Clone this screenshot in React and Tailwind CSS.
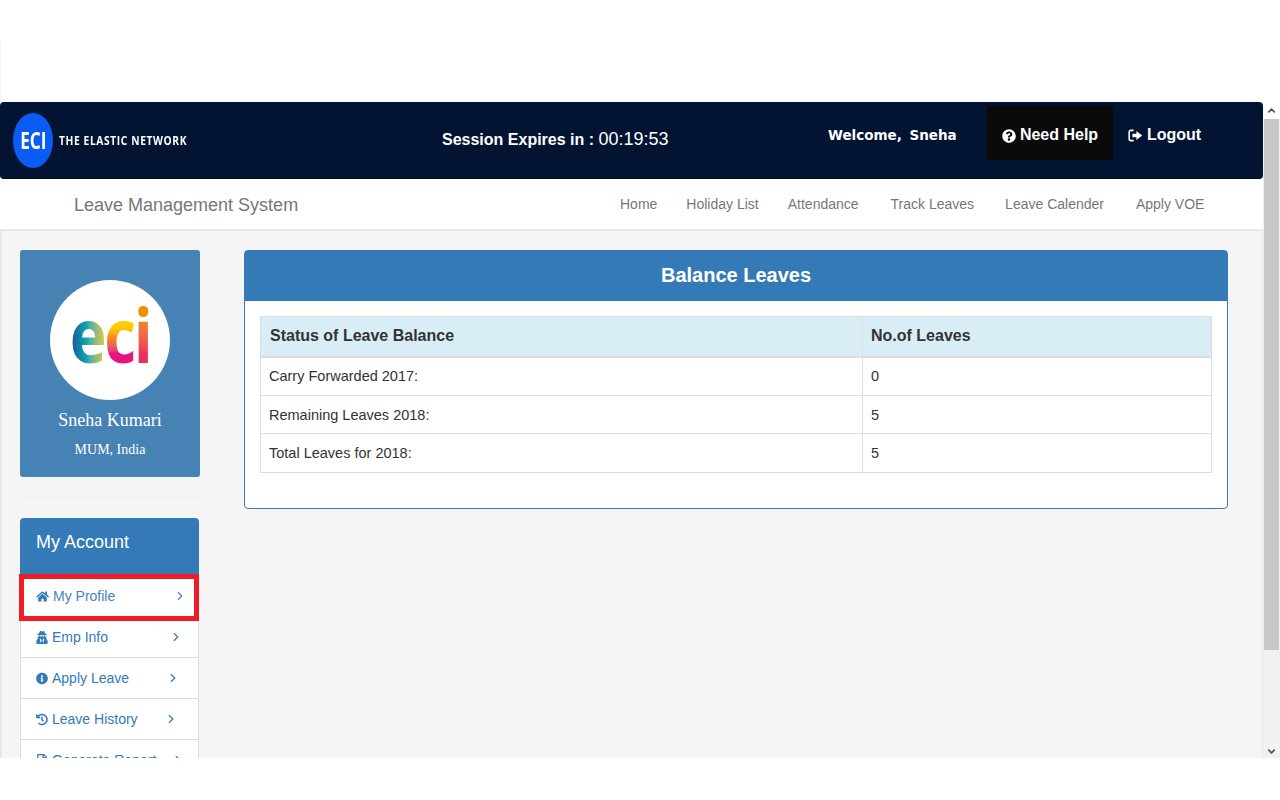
import React from "react";
import { FaHome, FaUserSecret, FaInfoCircle, FaHistory, FaRegFile, FaQuestionCircle } from "react-icons/fa";
import { LuChevronRight, LuChevronUp, LuChevronDown } from "react-icons/lu";

const NAV = ["Home", "Holiday List", "Attendance", "Track Leaves", "Leave Calender", "Apply VOE"];
const NAV_GAP = ["", "ml-[29px]", "ml-[29px]", "ml-[32px]", "ml-[31px]", "ml-[32px]"];

const MENU = [
  { label: "Emp Info", icon: FaUserSecret, gap: "ml-[61px]", h: "h-[37px] pb-[4px]" },
  { label: "Apply Leave", icon: FaInfoCircle, gap: "ml-[37px]", h: "h-[41px]" },
  { label: "Leave History", icon: FaHistory, gap: "ml-[26px]", h: "h-[41px]" },
  { label: "Generate Report", icon: FaRegFile, gap: "ml-[15px]", h: "h-[41px]" },
];

const ROWS = [
  ["Carry Forwarded 2017:", "0", "h-[39px]", ""],
  ["Remaining Leaves 2018:", "5", "h-[38px]", "pt-[2px]"],
  ["Total Leaves for 2018:", "5", "h-[39px]", ""],
];

function LogoutIcon() {
  return (
    <svg viewBox="0 0 16 14" className="w-[15px] h-[13px]" fill="none">
      <path d="M6 1.5H3.2C2 1.5 1.2 2.3 1.2 3.5v7c0 1.2.8 2 2 2H6" stroke="white" strokeWidth="1.7" />
      <path d="M9 2.2L15.2 7 9 11.8V9H4.6V5H9z" fill="white" />
    </svg>
  );
}

function EciLogo() {
  return (
    <div className="flex items-end h-[70px] font-['Open_Sans',sans-serif] font-bold text-[76px] leading-[70px] tracking-[-3px] scale-x-[0.82] -mt-[12px]">
      <span className="bg-linear-to-r from-[#1c4f9c] via-[#0ba7ad] to-[#d8c92c] bg-clip-text text-transparent">e</span>
      <span className="bg-linear-to-b from-[#ffcf00] from-40% via-[#f77f20] via-58% to-[#e6147e] to-78% bg-clip-text text-transparent">c</span>
      <span className="bg-linear-to-b from-[#f09000] from-24% to-[#ee2f5c] to-78% bg-clip-text text-transparent">i</span>
    </div>
  );
}

export default function App() {
  return (
    <div className="h-[800px] overflow-hidden bg-white font-['Liberation_Sans',Arial,sans-serif] text-sm text-[#333]">
      <div className="h-[102px] pt-[41px]">
        <div className="h-full border-l border-[#f4f4f4]" />
      </div>
      <div className="flex h-[656px]">
        <div className="w-[1263px] overflow-hidden">
          {/* top bar */}
          <header className="h-[77px] flex bg-[#021431] rounded-[4px] text-white border-b border-[#0a0a0a]">
            <div className="w-[200px] shrink-0 flex items-center pl-[13px] pt-[1px]">
              <div className="w-[40px] h-[55px] shrink-0 rounded-[50%] bg-[#0a5cf5] flex items-center justify-center font-['Open_Sans',sans-serif] font-bold text-[24px]">
                <span className="scale-x-[0.72]">ECI</span>
              </div>
              <span className="ml-[6px] font-['Open_Sans',sans-serif] font-bold text-[13px] tracking-[0.75px] whitespace-nowrap scale-x-[0.79] origin-left">THE ELASTIC NETWORK</span>
            </div>
            <div className="w-[386px] ml-[242px] shrink-0 pt-[26px] text-[16px] leading-[22px] whitespace-nowrap">
              <span className="font-bold">Session Expires in : </span>
              <span className="text-[18px]">00:19:53</span>
            </div>
            <div className="w-[159px] shrink-0 pt-[23px] font-['DejaVu_Sans',sans-serif] font-bold text-[13.5px] leading-[20px] whitespace-nowrap [word-spacing:3px]">
              Welcome, Sneha
            </div>
            <div className="mt-[4px] w-[126px] h-[54px] shrink-0 bg-[#0a0a0a] flex items-center justify-center gap-[4px] pt-[5px] text-[16px] font-bold">
              <FaQuestionCircle className="w-[14px] h-[14px]" />
              Need Help
            </div>
            <div className="ml-[15px] mt-[4px] h-[54px] flex items-center gap-[4px] pt-[5px] text-[16px] font-bold">
              <LogoutIcon />
              Logout
            </div>
          </header>

          {/* nav */}
          <nav className="h-[52px] flex items-center bg-white border-b-2 border-[#e7e7e7] text-[#777]">
            <span className="ml-[74px] w-[546px] pt-[3px] text-[18px]">Leave Management System</span>
            {NAV.map((n, i) => (
              <span key={n} className={NAV_GAP[i]}>{n}</span>
            ))}
          </nav>

          {/* content */}
          <div className="h-[527px] flex bg-[#f5f5f5] border-l-2 border-r border-[#e7e7e7] pl-[18px] pt-[19px]">
            <aside className="w-[180px] shrink-0">
              <div className="h-[227px] bg-[#4682b4] rounded-[3px] flex flex-col items-center pt-[30px] text-white font-['Liberation_Serif',serif]">
                <div className="w-[120px] h-[120px] rounded-full bg-white flex items-center justify-center">
                  <EciLogo />
                </div>
                <div className="mt-[9px] text-[18px] leading-[22px]">Sneha Kumari</div>
                <div className="mt-[9px] text-[14px] leading-[20px]">MUM, India</div>
              </div>
              <div className="mt-[20px] border-t border-[#eeeeee]" />
              <div className="mt-[20px] w-[179px]">
                <div className="h-[56px] bg-[#337ab7] rounded-t-[4px] pl-[16px] pt-[13px] text-white text-[18px] leading-[22px]">My Account</div>
                <div className="h-[47px] -ml-px w-[180px] bg-white border-[5px] border-[#ee1c25] flex items-center pl-[12px] pb-[3px] text-[#337ab7]">
                  <FaHome className="w-[13px] h-[13px]" />
                  <span className="ml-[4px] text-[#4a7fc0]">My Profile</span>
                  <LuChevronRight className="ml-[58px] w-[14px] h-[14px] text-[#4a7fc0]" strokeWidth={2} />
                </div>
                {MENU.map((m) => {
                  const Icon = m.icon;
                  return (
                    <div key={m.label} className={`${m.h} bg-white border-x border-b border-[#dddddd] flex items-center pl-[15px] text-[#337ab7]`}>
                      <Icon className="w-[12px] h-[13px]" />
                      <span className="ml-[4px] whitespace-nowrap">{m.label}</span>
                      <LuChevronRight className={`${m.gap} w-[14px] h-[14px]`} strokeWidth={2} />
                    </div>
                  );
                })}
              </div>
            </aside>

            <main className="ml-[44px] w-[984px] h-[259px] bg-white border border-[#337ab7] rounded-[4px]">
              <div className="h-[50px] bg-[#337ab7] pb-[2px] text-white text-[20px] font-bold flex items-center justify-center">Balance Leaves</div>
              <div className="px-[15px] pt-[15px]">
                <table className="w-[952px] border-collapse text-[14.5px] table-fixed">
                  <thead>
                    <tr className="h-[40px] bg-[#d9edf7] text-[16px]">
                      <th className="w-[602px] border border-b-2 border-[#dddddd] text-left font-bold pl-[9px]">Status of Leave Balance</th>
                      <th className="border border-b-2 border-[#dddddd] text-left font-bold pl-[8px]">No.of Leaves</th>
                    </tr>
                  </thead>
                  <tbody>
                    {ROWS.map(([label, value, h, pad]) => (
                      <tr key={label} className={h}>
                        <td className={`${pad} border border-[#dddddd] pl-[8px]`}>{label}</td>
                        <td className={`${pad} border border-[#dddddd] pl-[8px]`}>{value}</td>
                      </tr>
                    ))}
                  </tbody>
                </table>
              </div>
            </main>
          </div>
        </div>

        {/* scrollbar */}
        <div className="w-[17px] bg-[#f1f1f1] flex flex-col items-center">
          <div className="h-[17px] w-full flex items-center justify-center bg-white">
            <LuChevronUp className="w-[11px] h-[11px] text-[#505050]" strokeWidth={3.5} />
          </div>
          <div className="w-[15px] h-[531px] bg-[#c8c8c8]" />
          <div className="flex-1" />
          <div className="h-[17px] pt-[4px] flex items-center justify-center">
            <LuChevronDown className="w-[11px] h-[11px] text-[#505050]" strokeWidth={3.5} />
          </div>
        </div>
      </div>
    </div>
  );
}
